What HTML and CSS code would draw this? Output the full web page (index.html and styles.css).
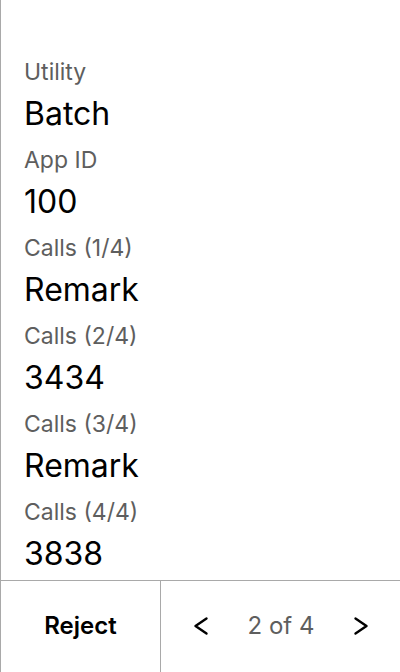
FILE: index.html
```html
<!DOCTYPE html>
<html lang="en">
<head>
<meta charset="utf-8">
<title>Batch call</title>
<link rel="stylesheet" href="styles.css">
</head>
<body>
<div class="panel">
  <div class="details">
    <div class="label">Utility</div>
    <div class="value">Batch</div>
    <div class="label">App ID</div>
    <div class="value">100</div>
    <div class="label">Calls (1/4)</div>
    <div class="value">Remark</div>
    <div class="label">Calls (2/4)</div>
    <div class="value">3434</div>
    <div class="label">Calls (3/4)</div>
    <div class="value">Remark</div>
    <div class="label">Calls (4/4)</div>
    <div class="value">3838</div>
  </div>
  <div class="footer">
    <button class="reject">Reject</button>
    <div class="pager">
      <button class="nav" aria-label="Previous">
        <svg viewBox="0 0 24 24" width="24" height="24"><path d="M17.5 4.5 L6.5 12 L17.5 19.5" fill="none" stroke="#000" stroke-width="2.4" stroke-linecap="round" stroke-linejoin="round"/></svg>
      </button>
      <span class="count">2 of 4</span>
      <button class="nav" aria-label="Next">
        <svg viewBox="0 0 24 24" width="24" height="24"><path d="M6.5 4.5 L17.5 12 L6.5 19.5" fill="none" stroke="#000" stroke-width="2.4" stroke-linecap="round" stroke-linejoin="round"/></svg>
      </button>
    </div>
  </div>
</div>
</body>
</html>
```

FILE: styles.css
```css
html, body {
  margin: 0;
  padding: 0;
  background: #fff;
}
body {
  font-family: Inter, "Noto Sans", sans-serif;
  color: #000;
}
.panel {
  height: 672px;
  display: flex;
  flex-direction: column;
  border-left: 1px solid #a9a9a9;
  box-sizing: border-box;
}
.details {
  flex: 1;
  min-height: 0;
  overflow: hidden;
  padding: 58px 24px 0 23px;
}
.label {
  font-size: 23px;
  line-height: 28px;
  color: #5e5e5e;
  margin-bottom: 10px;
}
.value {
  font-size: 32px;
  line-height: 36px;
  margin-bottom: 14px;
}
.value:last-child {
  margin-bottom: 0;
}
.footer {
  height: 92px;
  flex: none;
  display: flex;
  border-top: 1px solid #a9a9a9;
  box-sizing: border-box;
}
.reject {
  width: 160px;
  flex: none;
  border: 0;
  border-right: 1px solid #a9a9a9;
  background: none;
  font-family: inherit;
  font-size: 24px;
  font-weight: 600;
  color: #000;
  padding: 0 0 2px;
}
.pager {
  flex: 1;
  display: flex;
  align-items: center;
  justify-content: space-between;
  padding: 0 27px 2px 28px;
}
.nav {
  border: 0;
  background: none;
  padding: 0;
  width: 24px;
  height: 24px;
  display: flex;
}
.count {
  font-size: 24px;
  color: #5e5e5e;
}
```
